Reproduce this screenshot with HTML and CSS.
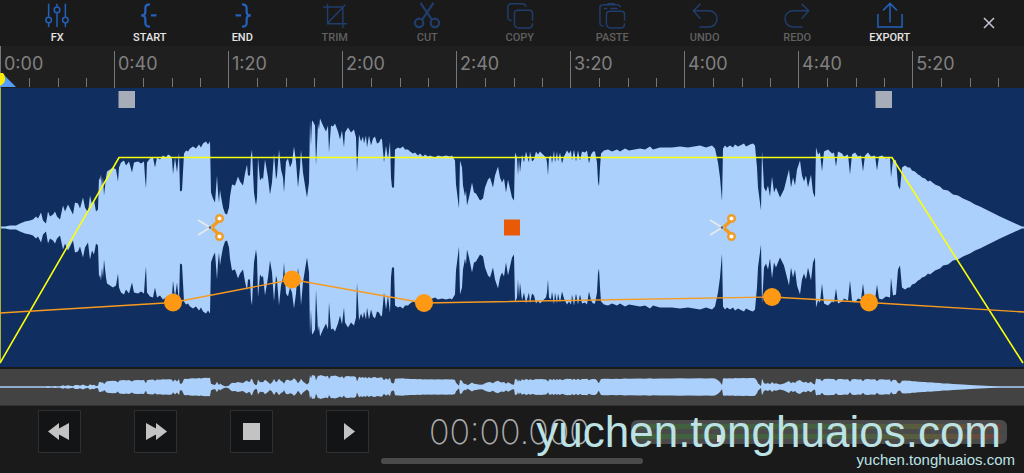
FILE: index.html
```html
<!DOCTYPE html>
<html lang="en">
<head>
    <meta charset="UTF-8">
    <meta name="viewport" content="width=device-width, initial-scale=1.0">
    <title>Audio Editor</title>
    <link rel="stylesheet" href="styles.css">
</head>
<body>
    <header class="toolbar">
        <div class="tools">
            <button class="tool">
                <svg class="icon" viewBox="0 0 28 28"><path d="M5 2v14M5 22v5M14 2v3M14 12v15M23 2v14M23 22v5"/><circle cx="5" cy="19.500" r="3"/><circle cx="14" cy="8.500" r="3"/><circle cx="23" cy="19.500" r="3"/></svg>
                FX
            </button>
            <button class="tool">
                <svg class="icon bold" viewBox="0 0 28 28"><path d="M14 2.500c-3.500 0-5 1-5 4v4c0 2.500-1 4-4.500 4 3.500 0 4.500 1.500 4.500 4v4c0 3 1.500 4 5 4M15 14.500h6"/></svg>
                START
            </button>
            <button class="tool">
                <svg class="icon bold" viewBox="0 0 28 28"><path d="M14 2.500c3.500 0 5 1 5 4v4c0 2.500 1 4 4.500 4-3.500 0-4.500 1.500-4.500 4v4c0 3-1.500 4-5 4M7 14.500h6"/></svg>
                END
            </button>
            <button class="tool" disabled>
                <svg class="icon" viewBox="0 0 28 28"><path d="M1 5.500h21.500V28M6 2v21.500h21M6 23L25 3"/></svg>
                TRIM
            </button>
            <button class="tool" disabled>
                <svg class="icon bold" viewBox="0 0 28 28"><path d="M7 1l12.500 18.500M21 1L8.500 19.500"/><circle cx="5.500" cy="22.500" r="4.500"/><circle cx="22.500" cy="22.500" r="4.500"/></svg>
                CUT
            </button>
            <button class="tool" disabled>
                <svg class="icon" viewBox="0 0 28 28"><path d="M5 20c-2 0-4-1-4-3V5c0-2 2-3 4-3h11c2 0 4 1 4 3M27.500 20v-8c0-2-1-3-3.500-3H12c-2 0-4 1-4 3v12c0 2 2 4 4 4h12c2 0 3.500-2 3.500-5"/></svg>
                COPY
            </button>
            <button class="tool" disabled>
                <svg class="icon" viewBox="0 0 28 28"><path d="M5 26c-2 0-4-1-4-3V6c0-2 2-3 4-3h14c2 0 4 1 4 3M9 2h8M5 7h4M12 7h8M27.500 20v-7c0-2-1-3-3.500-3H12c-2 0-4 1-4 3v11c0 2 2 4 4 4h12c2 0 3.500-2 3.500-5"/></svg>
                PASTE
            </button>
            <button class="tool" disabled>
                <svg class="icon" viewBox="0 0 28 28"><path d="M9 2L1.500 9.500 9 18M2 9.500h16c5 0 9 3.500 9 8.500s-4 9-9 9H8"/></svg>
                UNDO
            </button>
            <button class="tool" disabled>
                <svg class="icon" viewBox="0 0 28 28"><path d="M19 2l7.500 7.500L19 18M26 9.500H10c-5 0-9 3.500-9 8.500s4 9 9 9h10"/></svg>
                REDO
            </button>
            <button class="tool">
                <svg class="icon" viewBox="0 0 28 28"><path d="M1 13v14h26V13M14 22V2M6.500 9L14 1.500 21.500 9"/></svg>
                EXPORT
            </button>
        </div>
        <button class="close" aria-label="Close">
            <svg class="close-icon" viewBox="0 0 12 12"><path d="M1 1l10 10M11 1L1 11"/></svg>
        </button>
    </header>

    <div class="ruler">
        <div class="mark"><span>0:00</span><i></i><i></i><i></i></div>
        <div class="mark"><span>0:40</span><i></i><i></i><i></i></div>
        <div class="mark"><span>1:20</span><i></i><i></i><i></i></div>
        <div class="mark"><span>2:00</span><i></i><i></i><i></i></div>
        <div class="mark"><span>2:40</span><i></i><i></i><i></i></div>
        <div class="mark"><span>3:20</span><i></i><i></i><i></i></div>
        <div class="mark"><span>4:00</span><i></i><i></i><i></i></div>
        <div class="mark"><span>4:40</span><i></i><i></i><i></i></div>
        <div class="mark"><span>5:20</span><i></i><i></i><i></i></div>
        <svg class="playhead" viewBox="0 0 16 14"><path d="M0 0h2l14 14H0z" fill="#549dfa"/><path d="M0 0h3q2 2 2 5v2q0 3-5 6z" fill="#ffeb00"/></svg>
    </div>

    <main class="editor">
        <svg class="wave" viewBox="0 0 1024 279">
            <path id="wave" class="peaks"/>
            <path class="cursor" d="M.5 0v275"/>
            <path class="fade" d="M0 275L119 69.500H892L1023 275"/>
            <path class="volume" d="M0 225L173 214.500 292 191.500 424 215 772 209 869 214.500 1024 224"/>
            <g fill="#ff9914">
                <circle cx="173" cy="214.500" r="9"/>
                <circle cx="292" cy="191.500" r="9"/>
                <circle cx="424" cy="215" r="9"/>
                <circle cx="772" cy="209" r="9"/>
                <circle cx="869" cy="214.500" r="9"/>
            </g>
            <g fill="#a7adb8">
                <rect x="118.500" y="3" width="16.500" height="17"/>
                <rect x="875.500" y="3" width="16.500" height="17"/>
            </g>
            <rect x="504" y="131.500" width="16" height="16" fill="#e95a08"/>
            <g id="scissors">
                <path d="M198 132L211 140M198 147L211 139" fill="none" stroke="#e8e8e8" stroke-width="1.800"/>
                <path d="M212 139L218 133.500M212 140L218 145.500" stroke="#f09c24" stroke-width="3.500"/>
                <g fill="#fff" stroke="#f09c24" stroke-width="2.400">
                    <circle cx="219.500" cy="130.500" r="3.300"/>
                    <circle cx="219.500" cy="148.500" r="3.300"/>
                </g>
                <circle cx="210" cy="139.500" r="1.200" fill="#555"/>
            </g>
            <use href="#scissors" x="512"/>
        </svg>
    </main>

    <div class="overview">
        <svg class="wave" viewBox="0 0 1024 36"><path id="overview" class="peaks"/></svg>
    </div>

    <footer class="transport">
        <button class="key" aria-label="Rewind"><svg viewBox="0 0 43 43"><path d="M10 21.500L21 13v5.500L31 13v17l-10-5.500V30z"/></svg></button>
        <button class="key" aria-label="Forward"><svg viewBox="0 0 43 43"><path d="M33 21.500L22 13v5.500L12 13v17l10-5.500V30z"/></svg></button>
        <button class="key" aria-label="Stop"><svg viewBox="0 0 43 43"><path d="M13 13h17v17H13z"/></svg></button>
        <button class="key" aria-label="Play"><svg viewBox="0 0 43 43"><path d="M18 13l11 8.500L18 30z"/></svg></button>
        <output class="time">00:00.000</output>
        <div class="levels">
            <div class="level"></div>
            <div class="level"></div>
            <div class="knob"></div>
        </div>
    </footer>

    <div class="home-bar"></div>
    <div class="credit">
        <span class="credit-large">yuchen.tonghuaios.com</span>
        <span class="credit-small">yuchen.tonghuaios.com</span>
    </div>

    <script src="wave.js"></script>
</body>
</html>
```
FILE: styles.css
```css
body {
    margin: 0;
    position: relative;
    min-height: 100vh;
    overflow: hidden;
    background-color: #1a1a1a;
    font-family: Roboto, "Liberation Sans", sans-serif;
}

button {
    margin: 0;
    padding: 0;
    border: none;
    background: none;
    font: inherit;
    color: inherit;
}

svg {
    display: block;
}

/* Toolbar */
.toolbar {
    display: flex;
    gap: 18px;
    height: 46px;
    padding-left: 11px;
}

.tools {
    flex: 1;
    display: grid;
    grid-template-columns: repeat(10, 1fr);
}

.tool {
    display: flex;
    flex-direction: column;
    align-items: center;
    gap: 3px;
    padding-top: 2px;
    font-size: 11px;
    font-weight: 500;
    line-height: 14px;
    color: #e4e4e4;
}

.tool:disabled {
    color: #606060;
}

.icon {
    width: 26px;
    height: 26px;
    fill: none;
    stroke: #2361bd;
    stroke-width: 1.6;
    overflow: visible;
}

.icon.bold {
    stroke-width: 2.4;
}

.tool:disabled .icon {
    stroke: #203d6c;
}

.close {
    display: flex;
    align-items: center;
    justify-content: center;
    width: 70px;
}

.close-icon {
    width: 12px;
    height: 12px;
    fill: none;
    stroke: #c2c7d3;
    stroke-width: 1.5;
}

/* Time ruler */
.ruler {
    position: relative;
    display: flex;
    height: 42px;
    overflow: hidden;
    background-color: #1f1f1f;
}

.mark {
    flex: 0 0 11.135%;
    box-sizing: border-box;
    display: grid;
    grid-template-columns: repeat(4, 1fr);
    grid-template-rows: 27px 9px;
    margin-top: 5px;
    border-left: 1px solid #777;
}

.mark:first-child {
    margin-top: 0;
    padding-top: 5px;
}

.mark span {
    grid-column: 1 / -1;
    padding-left: 3px;
    font-family: Inter, sans-serif;
    font-size: 18px;
    line-height: 26px;
    color: #808080;
}

.mark i {
    border-left: 1px solid #777;
}

.mark i:nth-of-type(1) {
    grid-column: 2;
}

.playhead {
    position: absolute;
    left: 0;
    bottom: 1px;
    width: 16px;
    height: 14px;
}

/* Waveform */
.editor {
    background-color: #102e5f;
}

.wave {
    width: 100%;
    height: auto;
}

.peaks {
    fill: #abd0fb;
}

.cursor,
.fade,
.volume {
    fill: none;
    stroke: #a9b13b;
    stroke-width: 1;
}

.fade {
    stroke: #fbff0c;
    stroke-width: 1.6;
}

.volume {
    stroke: #f79a20;
    stroke-width: 1.4;
}

.overview {
    border-top: 2px solid #1a1a1a;
    border-bottom: 1px solid #303030;
    background-color: #434343;
}

/* Transport */
.transport {
    display: flex;
    align-items: center;
    padding: 4px 17px 0 38px;
}

.key {
    box-sizing: border-box;
    flex: none;
    width: 43px;
    height: 43px;
    margin-right: 53px;
    border: 1px solid #2f2f2f;
    background-color: #131416;
}

.key svg {
    margin: -1px;
    fill: #c3c3c3;
}

.time {
    flex: none;
    width: 202px;
    margin-left: 7px;
    font-family: Inter, Roboto, sans-serif;
    font-size: 34px;
    font-weight: 200;
    line-height: 43px;
    color: #aaa;
}

.levels {
    position: relative;
    flex: 1;
    display: flex;
    flex-direction: column;
    gap: 5px;
    padding: 4px 6px 5px;
    border-radius: 6px;
    background-color: #4a4a4a;
}

.level {
    height: 5px;
    background: linear-gradient(to right, #40603e 0%, #45603f 55%, #5c5c3d 80%, #63503c 90%, #6a4040 100%);
}

.knob {
    position: absolute;
    left: 23%;
    bottom: 2px;
    width: 5px;
    height: 7px;
    background-color: #e4e4e4;
}

.home-bar {
    position: absolute;
    left: 50%;
    bottom: 9px;
    width: 262px;
    height: 6px;
    margin-left: -131px;
    border-radius: 3px;
    background-color: #4b4b4b;
}

/* Credit laid over the transport */
.credit {
    position: absolute;
    right: 9px;
    bottom: 4px;
    display: flex;
    flex-direction: column;
    align-items: flex-end;
    font-family: "Liberation Sans", Arial, sans-serif;
    color: #bce2e5;
}

.credit-large {
    padding-right: 14px;
    font-size: 44px;
    line-height: 38px;
}

.credit-small {
    font-size: 15px;
    line-height: 18px;
}
```
FILE: wave.js
```js
// x and peak height pairs along the clip
var peaks = [
    0,1, 5,1, 10,2, 16,2, 20,4, 25,6, 30,7, 33,8, 36,11, 38,9, 41,15, 43,7, 46,4, 48,16, 50,11, 53,13, 55,16, 57,11,
    60,8, 63,22, 65,16, 68,23, 70,19, 73,13, 75,25, 78,24, 80,19, 83,30, 85,20, 88,15, 90,32, 92,23, 94,27, 96,16,
    98,18, 99,50, 100,47, 101,53, 102,40, 103,50, 104,32, 106,50, 107,56, 110,58, 113,60, 116,58, 118,46, 119,60,
    121,65, 124,67, 126,62, 129,66, 132,55, 134,65, 138,66, 141,64, 144,66, 145,50, 146,39, 147,65, 150,69, 153,70,
    155,60, 157,70, 160,68, 163,72, 166,70, 168,73, 170,72, 172,69, 173,53, 175,70, 177,55, 179,75, 180,36, 182,37,
    184,74, 186,77, 188,76, 190,79, 193,81, 196,79, 199,83, 201,80, 203,84, 206,86, 208,83, 210,86, 211,35, 213,29,
    215,25, 217,52, 218,35, 219,25, 220,38, 221,31, 223,20, 225,14, 227,13, 229,20, 230,31, 232,43, 235,42, 238,51,
    240,46, 243,42, 245,54, 247,63, 248,52, 250,52, 251,72, 252,78, 253,55, 254,35, 256,22, 257,30, 258,70, 260,47,
    262,50, 263,48, 265,68, 268,50, 270,33, 272,45, 274,74, 276,48, 277,52, 279,78, 281,58, 283,50, 284,35, 286,66,
    288,69, 290,60, 292,65, 294,81, 296,66, 298,40, 300,60, 301,78, 303,55, 305,42, 307,30, 309,45, 310,107, 311,82,
    312,107, 313,106, 315,102, 316,62, 318,104, 319,98, 320,109, 323,102, 326,96, 328,102, 329,75, 331,102, 333,101,
    335,104, 338,96, 340,88, 342,97, 344,80, 345,95, 348,100, 351,95, 354,98, 356,90, 357,55, 359,93, 361,86, 363,91,
    364,84, 366,92, 367,80, 369,92, 371,82, 373,89, 375,91, 377,84, 379,85, 381,89, 382,88, 384,65, 386,82, 388,68,
    390,86, 391,50, 392,40, 394,40, 395,78, 398,80, 400,79, 403,81, 405,78, 408,78, 410,76, 413,74, 415,75, 418,72,
    420,74, 423,71, 425,73, 428,71, 430,72, 435,70, 438,72, 442,71, 446,72, 450,71, 452,72, 455,67, 456,43, 459,19,
    460,67, 462,60, 463,42, 465,31, 466,37, 467,22, 469,30, 472,45, 474,35, 476,34, 480,27, 483,29, 485,40, 488,48,
    490,50, 493,40, 495,52, 498,61, 500,50, 502,45, 504,49, 506,35, 508,48, 510,39, 512,30, 514,27, 515,75, 517,70,
    518,52, 519,70, 520,55, 522,73, 524,65, 526,76, 527,72, 529,65, 530,76, 532,66, 534,68, 536,76, 538,73, 540,76,
    543,73, 546,70, 547,65, 548,52, 549,70, 551,72, 552,64, 554,77, 555,65, 557,76, 558,66, 560,75, 562,64, 564,71,
    567,77, 569,74, 571,77, 572,67, 574,78, 576,66, 578,77, 580,67, 582,76, 585,75, 587,77, 589,64, 591,73, 593,76,
    595,76, 597,65, 598,46, 599,41, 600,60, 601,74, 604,77, 608,78, 612,76, 617,78, 620,76, 625,79, 629,77, 640,79,
    645,78, 650,81, 653,78, 660,80, 672,80, 680,81, 688,80, 700,82, 706,80, 712,82, 715,79, 718,65, 720,50, 722,26,
    723,79, 725,82, 727,80, 730,82, 733,80, 735,83, 738,81, 744,84, 746,81, 750,83, 753,84, 755,82, 757,60, 758,40,
    761,17, 762,77, 763,60, 764,40, 766,36, 768,42, 770,31, 772,51, 774,35, 776,40, 780,30, 784,38, 787,50, 789,58,
    791,40, 793,50, 795,42, 797,58, 800,67, 802,52, 804,46, 806,52, 808,40, 811,53, 813,35, 815,30, 816,80, 818,73,
    820,75, 822,56, 824,76, 828,78, 832,74, 834,75, 836,61, 838,76, 842,74, 844,71, 848,73, 850,53, 852,73, 855,75,
    858,71, 861,72, 863,56, 865,72, 868,75, 871,71, 875,72, 877,57, 879,71, 882,72, 886,69, 890,70, 891,50, 893,68,
    896,67, 898,42, 900,38, 902,60, 905,62, 908,60, 910,60, 912,57, 915,56, 918,53, 920,52, 922,50, 925,49, 928,46,
    930,47, 935,43, 940,41, 943,38, 948,37, 953,33, 958,32, 963,29, 970,26, 975,23, 980,21, 990,16, 1000,11, 1022,1,
    1024,1
];

// Mirror the peaks around the middle line
function drawWave(id, middle, scale, floor) {
    var top = '';
    var bottom = '';
    for (var i = 0; i < peaks.length; i += 2) {
        var height = Math.max(0.8, peaks[i + 1] * scale - floor);
        top += (i ? 'L' : 'M') + peaks[i] + ' ' + (middle - height);
        bottom = 'L' + peaks[i] + ' ' + (middle + height) + bottom;
    }
    document.getElementById(id).setAttribute('d', top + bottom + 'Z');
}

drawWave('wave', 139.5, 1, 0);
drawWave('overview', 18, 0.12, 1);
```
